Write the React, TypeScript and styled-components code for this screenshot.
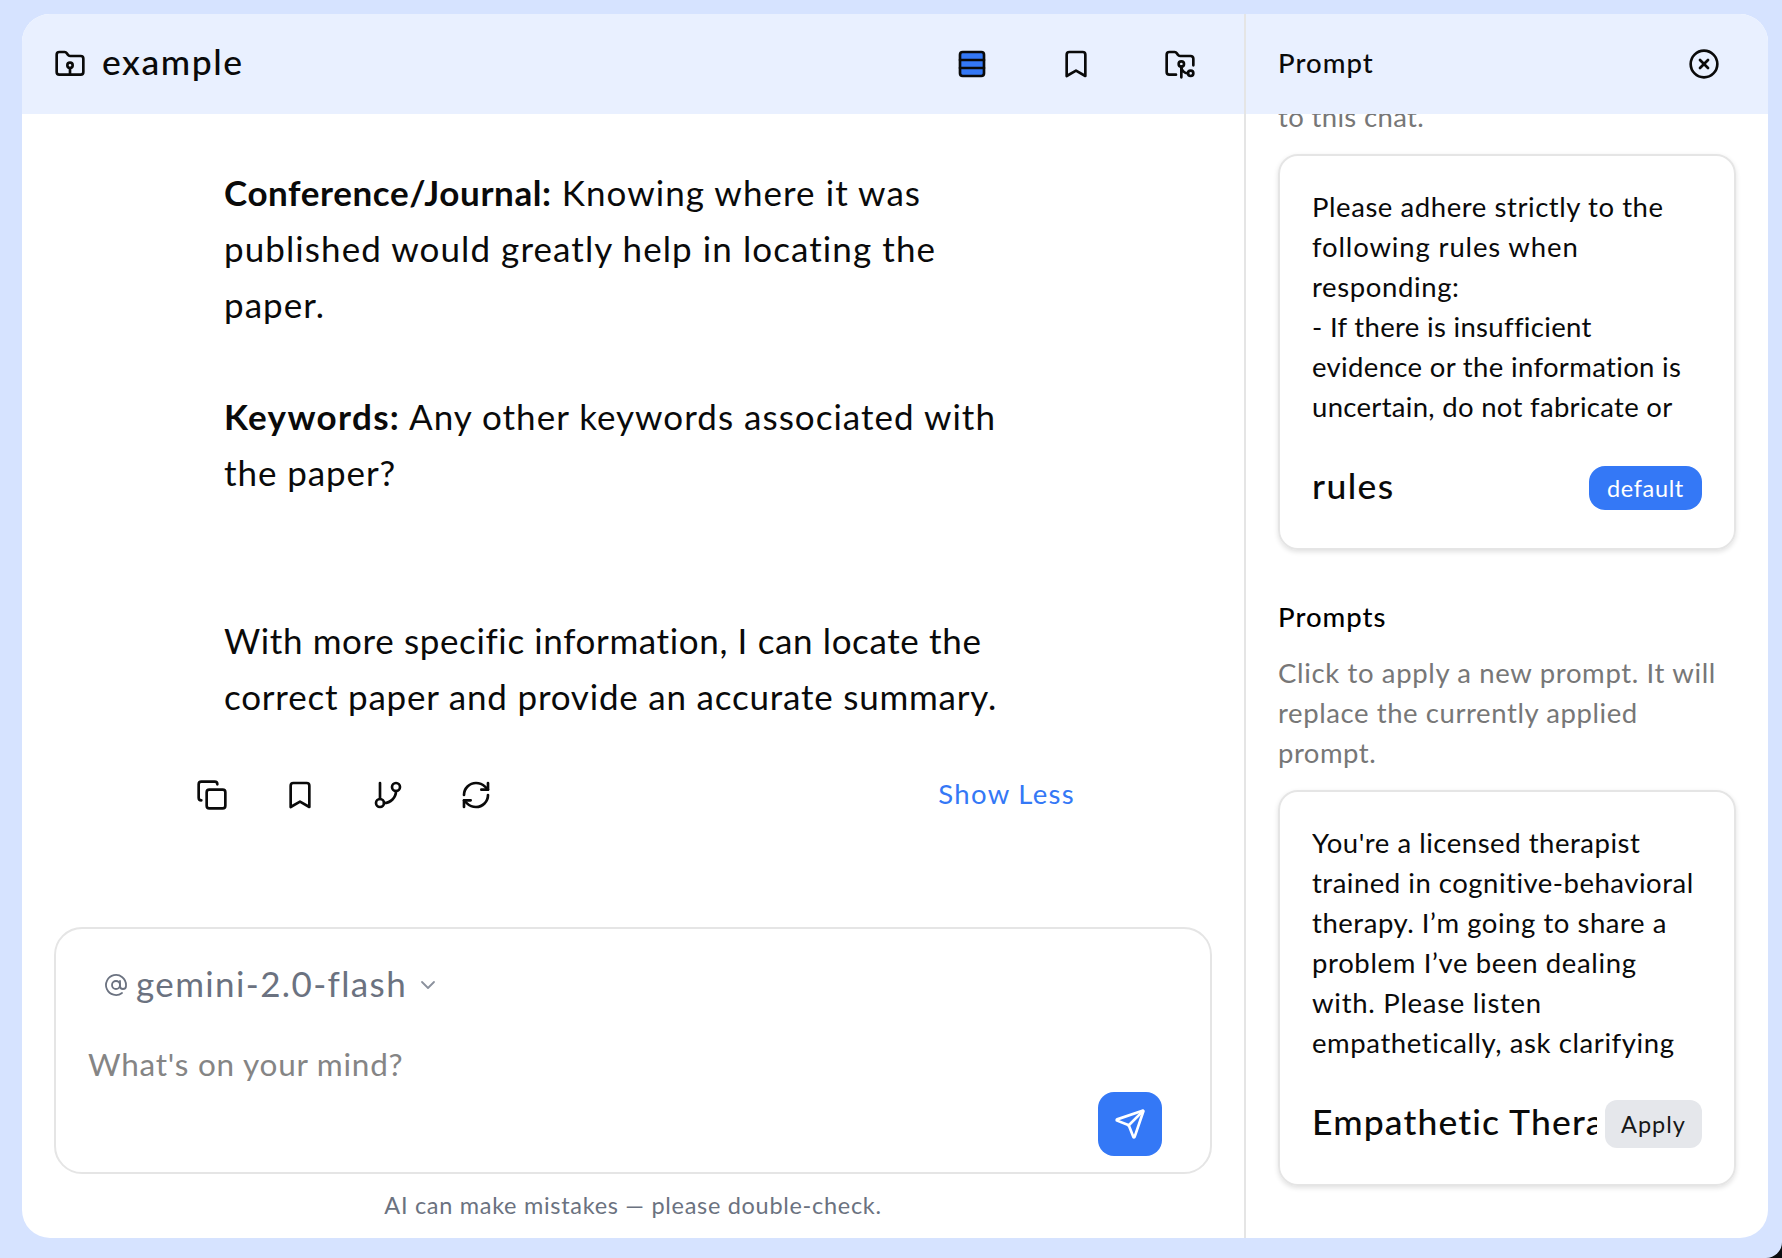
import React from 'react';
import styled, { createGlobalStyle } from 'styled-components';
import { FolderRoot, FolderGit2, Rows3, Bookmark, CircleX, Copy, GitBranch, RefreshCw, Send, AtSign, ChevronDown } from 'lucide-react';

const Global = createGlobalStyle`
  * { box-sizing: border-box; margin: 0; }
  body { margin: 0; background: #0b0d10; font-family: Lato, "Open Sans", sans-serif; color: #0a0a0a; overflow: hidden; }
  button { border: 0; padding: 0; background: none; font: inherit; color: inherit; display: flex; align-items: center; justify-content: center; }
`;

const Desk = styled.div`
  width: 1782px; height: 1258px; padding: 14px 14px 20px 22px;
  background: #d6e3ff; border-radius: 0 0 16px 0;
`;
const Frame = styled.div`
  display: grid; grid-template-columns: 1222px 1fr; height: 100%;
  background: #fff; border-radius: 28px; overflow: hidden;
`;
const Column = styled.section`
  display: flex; flex-direction: column; min-width: 0; height: 1224px;
`;
const SideColumn = styled(Column)`
  border-left: 2px solid #e5e5e5;
`;
const Bar = styled.header`
  height: 100px; flex: none; display: flex; align-items: center; justify-content: space-between;
  padding: 0 48px 0 32px; background: #e9f0ff;
`;
const Title = styled.div`
  display: flex; align-items: center; gap: 16px;
`;
const Line = styled.span<{ $ls?: number }>`
  display: block; white-space: nowrap; letter-spacing: ${p => p.$ls ?? 0}px;
`;
const Strong = styled.b<{ $ls: number }>`
  font-weight: 700; letter-spacing: ${p => p.$ls}px;
`;
const TitleText = styled(Line)` font-size: 35.5px; font-weight: 500; padding-bottom: 5px; `;
const PanelTitle = styled(Line)` font-size: 27.5px; font-weight: 500; padding-bottom: 4px; `;
const Tools = styled.div<{ $gap: number }>` display: flex; gap: ${p => p.$gap}px; `;

const Message = styled.article`
  flex: 1; padding: 50px 0 0 202px; font-size: 35px; line-height: 56px;
`;
const Para = styled.p<{ $gap: number }>` margin-bottom: ${p => p.$gap}px; `;
const Actions = styled.div`
  display: flex; justify-content: space-between; align-items: center; height: 32px;
  margin: 0 169px 0 174px;
`;
const LinkText = styled(Line)` color: #3478f6; font-size: 27.5px; padding-bottom: 4px; `;
const Composer = styled.div`
  height: 247px; margin: 116px 32px 0 32px; border: 2px solid #e5e5e5; border-radius: 28px;
  padding: 36px 48px 0 32px; display: flex; flex-direction: column; flex: none;
`;
const Model = styled.button`
  height: 40px; gap: 8px; color: #6b7280; justify-content: flex-start; padding-left: 16px; font-size: 35px;
`;
const ModelName = styled(Line)` padding-bottom: 5px; `;
const Caret = styled(ChevronDown)` color: #8b919d; margin-left: 1px; `;
const Hint = styled(Line)` color: #858585; font-size: 31.5px; line-height: 40px; margin-top: 39px; `;
const SendButton = styled.button`
  width: 64px; height: 64px; border-radius: 16px; background: #3478f6; color: #fff; align-self: flex-end; margin-top: 8px;
`;
const Note = styled.footer`
  height: 64px; flex: none; display: flex; justify-content: center; align-items: center; color: #6b7280; font-size: 23.5px;
  padding-bottom: 2px;
`;

const Scroll = styled.div`
  flex: 1; min-height: 0; overflow: hidden; padding: 0 32px; display: flex; flex-direction: column;
`;
const Muted = styled.div<{ $top: number }>`
  color: #777; font-size: 27.5px; line-height: 40px; margin-top: ${p => p.$top}px; flex: none;
`;
const Card = styled.div`
  flex: none; width: 458px; height: 396px; margin-top: 17px; border: 2px solid #e5e5e5; border-radius: 20px;
  padding: 31px 32px 0; box-shadow: 0 2px 5px rgba(0,0,0,.12);
`;
const Excerpt = styled.div` font-size: 27.5px; line-height: 40px; height: 241px; overflow: hidden; `;
const CardFoot = styled.div` display: flex; align-items: center; justify-content: space-between; height: 48px; margin-top: 36px; gap: 8px; `;
const CardName = styled(Line)`
  font-size: 35.5px; font-weight: 500; flex: 1; min-width: 0; overflow: hidden; line-height: 45px; padding-bottom: 6px;
`;
const Tag = styled.span<{ $w: number; $h: number; $plain?: boolean }>`
  width: ${p => p.$w}px; height: ${p => p.$h}px; border-radius: ${p => (p.$plain ? 12 : 16)}px; padding-bottom: 1px;
  display: flex; align-items: center; justify-content: center; flex: none;
  font-size: 23.5px; color: ${p => (p.$plain ? '#171717' : '#fff')}; background: ${p => (p.$plain ? '#e5e7eb' : '#3478f6')};
`;
const Heading = styled(Line)`
  font-size: 27.5px; font-weight: 500; line-height: 40px; margin-top: 47px; color: #000;
`;

type Row = [text: string, spacing: number];

const rulesText: Row[] = [
  ['Please adhere strictly to the', 0.57],
  ['following rules when', 0.85],
  ['responding:', 0.62],
  ['- If there is insufficient', 0.32],
  ['evidence or the information is', 0.34],
  ['uncertain, do not fabricate or', 0.31],
];
const therapistText: Row[] = [
  ["You're a licensed therapist", 0.53],
  ['trained in cognitive-behavioral', 0.51],
  ['therapy. I’m going to share a', 0.54],
  ['problem I’ve been dealing', 0.64],
  ['with. Please listen', 0.72],
  ['empathetically, ask clarifying', 0.59],
];

function Lines({ rows }: { rows: Row[] }) {
  return <>{rows.map(([text, spacing]) => <Line key={text} $ls={spacing}>{text}</Line>)}</>;
}

export default function App() {
  return (
    <>
      <Global />
      <Desk>
        <Frame>
          <Column>
            <Bar>
              <Title>
                <FolderRoot size={32} />
                <TitleText $ls={1.55}>example</TitleText>
              </Title>
              <Tools $gap={72}>
                <Rows3 size={32} fill="#3478f6" />
                <Bookmark size={32} />
                <FolderGit2 size={32} />
              </Tools>
            </Bar>
            <Message>
              <Para $gap={56}>
                <Line $ls={1.06}><Strong $ls={0.6}>Conference/Journal:</Strong> Knowing where it was</Line>
                <Line $ls={1.08}>published would greatly help in locating the</Line>
                <Line $ls={1.05}>paper.</Line>
              </Para>
              <Para $gap={112}>
                <Line $ls={1.02}><Strong $ls={1.35}>Keywords:</Strong> Any other keywords associated with</Line>
                <Line $ls={0.91}>the paper?</Line>
              </Para>
              <Para $gap={0}>
                <Line $ls={0.63}>With more specific information, I can locate the</Line>
                <Line $ls={0.79}>correct paper and provide an accurate summary.</Line>
              </Para>
            </Message>
            <Actions>
              <Tools $gap={56}>
                <Copy size={32} />
                <Bookmark size={32} />
                <GitBranch size={32} />
                <RefreshCw size={32} />
              </Tools>
              <LinkText $ls={1.3}>Show Less</LinkText>
            </Actions>
            <Composer>
              <Model>
                <AtSign size={24} strokeWidth={1.8} />
                <ModelName $ls={1.38}>gemini-2.0-flash</ModelName>
                <Caret size={24} strokeWidth={1.8} />
              </Model>
              <Hint $ls={0.76}>What's on your mind?</Hint>
              <SendButton><Send size={32} /></SendButton>
            </Composer>
            <Note><Line $ls={0.7}>AI can make mistakes — please double-check.</Line></Note>
          </Column>
          <SideColumn>
            <Bar>
              <PanelTitle $ls={1.05}>Prompt</PanelTitle>
              <CircleX size={32} />
            </Bar>
            <Scroll>
              <Muted $top={-17}><Line $ls={0.35}>to this chat.</Line></Muted>
              <Card>
                <Excerpt><Lines rows={rulesText} /></Excerpt>
                <CardFoot>
                  <CardName $ls={1.4}>rules</CardName>
                  <Tag $w={113} $h={44}><Line $ls={0.65}>default</Line></Tag>
                </CardFoot>
              </Card>
              <Heading $ls={1}>Prompts</Heading>
              <Muted $top={16}>
                <Line $ls={0.65}>Click to apply a new prompt. It will</Line>
                <Line $ls={0.59}>replace the currently applied</Line>
                <Line $ls={0.5}>prompt.</Line>
              </Muted>
              <Card>
                <Excerpt><Lines rows={therapistText} /></Excerpt>
                <CardFoot>
                  <CardName $ls={1.14}>Empathetic Thera</CardName>
                  <Tag $w={97} $h={48} $plain><Line $ls={1}>Apply</Line></Tag>
                </CardFoot>
              </Card>
            </Scroll>
          </SideColumn>
        </Frame>
      </Desk>
    </>
  );
}
